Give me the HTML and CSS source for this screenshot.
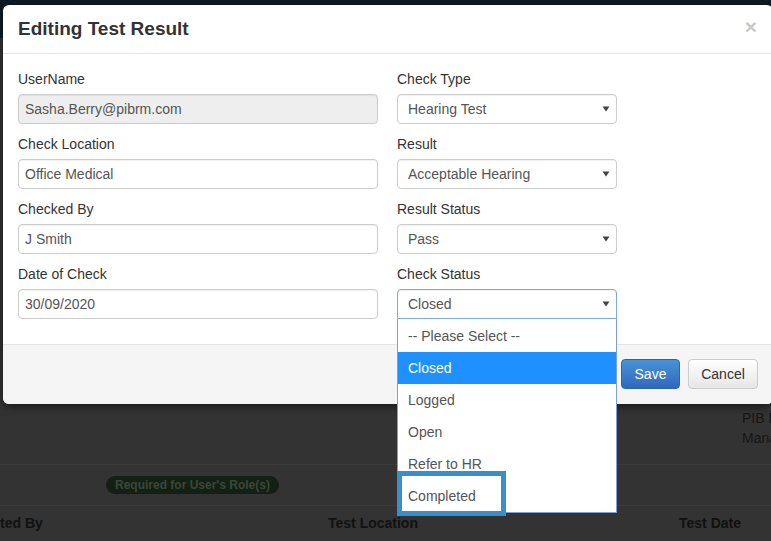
FILE: index.html
```html
<!DOCTYPE html>
<html>
<head>
<meta charset="utf-8">
<link rel="stylesheet" href="styles.css">
</head>
<body>
<div class="page">
  <div class="navbar"></div>
  <div class="behind-top">
    <div class="org">
      <div>PIB Risk</div>
      <div>Management</div>
    </div>
  </div>
  <div class="badge-row">
    <span class="badge">Required for User's Role(s)</span>
  </div>
  <div class="thead">
    <span class="th th-by">ted By</span>
    <span class="th th-loc">Test Location</span>
    <span class="th th-date">Test Date</span>
  </div>
</div>

<div class="modal">
  <div class="modal-header">
    <h4 class="modal-title">Editing Test Result</h4>
    <span class="close">&times;</span>
  </div>
  <div class="modal-body">
    <div class="form-grid">
      <div class="group">
        <label class="lbl">UserName</label>
        <div class="input disabled">Sasha.Berry@pibrm.com</div>
      </div>
      <div class="group">
        <label class="lbl">Check Type</label>
        <div class="input select"><span>Hearing Test</span><svg class="caret" width="8" height="6" viewBox="0 0 8 6"><path d="M0.5 0.5 L7.5 0.5 L4 5.5 Z" fill="#444"/></svg></div>
      </div>
      <div class="group">
        <label class="lbl">Check Location</label>
        <div class="input">Office Medical</div>
      </div>
      <div class="group">
        <label class="lbl">Result</label>
        <div class="input select"><span>Acceptable Hearing</span><svg class="caret" width="8" height="6" viewBox="0 0 8 6"><path d="M0.5 0.5 L7.5 0.5 L4 5.5 Z" fill="#444"/></svg></div>
      </div>
      <div class="group">
        <label class="lbl">Checked By</label>
        <div class="input">J Smith</div>
      </div>
      <div class="group">
        <label class="lbl">Result Status</label>
        <div class="input select"><span>Pass</span><svg class="caret" width="8" height="6" viewBox="0 0 8 6"><path d="M0.5 0.5 L7.5 0.5 L4 5.5 Z" fill="#444"/></svg></div>
      </div>
      <div class="group">
        <label class="lbl">Date of Check</label>
        <div class="input">30/09/2020</div>
      </div>
      <div class="group">
        <label class="lbl">Check Status</label>
        <div class="input select focused"><span>Closed</span><svg class="caret" width="8" height="6" viewBox="0 0 8 6"><path d="M0.5 0.5 L7.5 0.5 L4 5.5 Z" fill="#444"/></svg></div>
      </div>
    </div>
  </div>
  <div class="modal-footer">
    <button class="btn btn-primary">Save</button>
    <button class="btn btn-default">Cancel</button>
  </div>
</div>

<div class="dropdown">
  <div class="opt">-- Please Select --</div>
  <div class="opt selected">Closed</div>
  <div class="opt">Logged</div>
  <div class="opt">Open</div>
  <div class="opt">Refer to HR</div>
  <div class="opt">Completed</div>
</div>
<div class="annot"></div>
</body>
</html>
```

FILE: styles.css
```css
html, body {
  margin: 0;
  padding: 0;
}
body {
  width: 771px;
  height: 541px;
  overflow: hidden;
  background: #333333;
  font-family: "Liberation Sans", Arial, sans-serif;
  font-size: 14px;
  color: #333;
  position: relative;
}
.page {
  display: flex;
  flex-direction: column;
}
.navbar {
  height: 38px;
  background: #0e1a24;
}
.behind-top {
  height: 427px;
  box-sizing: border-box;
  padding-top: 370px;
  padding-left: 742px;
  border-bottom: 1px solid #3a3a3a;
  overflow: hidden;
  white-space: nowrap;
}
.org {
  color: #161616;
  font-size: 14px;
  line-height: 20px;
}
.badge-row {
  height: 41px;
  box-sizing: border-box;
  border-bottom: 1px solid #3a3a3a;
  padding-left: 106px;
  display: flex;
  align-items: center;
}
.badge {
  background: #132013;
  color: #3b473b;
  font-weight: bold;
  font-size: 12px;
  line-height: 18px;
  padding: 0 9px;
  border-radius: 9px;
  white-space: nowrap;
}
.thead {
  height: 34px;
  display: flex;
  align-items: center;
  white-space: nowrap;
}
.th {
  font-weight: bold;
  font-size: 14px;
  color: #111;
}
.th-by { width: 328px; }
.th-loc { width: 351px; }

.modal {
  position: absolute;
  left: 3px;
  top: 5px;
  width: 770px;
  background: #fff;
  border-radius: 6px;
  box-shadow: 0 3px 9px rgba(0,0,0,0.5);
}
.modal-header {
  display: flex;
  justify-content: space-between;
  align-items: center;
  padding: 15px;
  height: 18px;
  border-bottom: 1px solid #e5e5e5;
}
.modal-title {
  margin: 0;
  font-size: 19px;
  line-height: 20px;
  font-weight: bold;
  color: #333;
}
.close {
  font-size: 21px;
  font-weight: bold;
  color: #c8c8c8;
  line-height: 20px;
  margin-right: 1px;
  margin-top: -4px;
}
.modal-body {
  padding: 15px;
}
.form-grid {
  display: grid;
  grid-template-columns: 360px 220px;
  column-gap: 19px;
}
.group {
  display: flex;
  flex-direction: column;
  margin-bottom: 10px;
}
.lbl {
  line-height: 20px;
  margin-bottom: 5px;
  color: #333;
}
.input {
  height: 30px;
  box-sizing: border-box;
  border: 1px solid #ccc;
  border-radius: 4px;
  padding: 0 6px;
  line-height: 28px;
  color: #555;
  background: #fff;
  box-shadow: inset 0 1px 1px rgba(0,0,0,0.06);
}
.input.disabled {
  background: #eeeeee;
}
.select {
  display: flex;
  align-items: center;
  justify-content: space-between;
  padding: 0 6px 0 10px;
}
.caret {
  display: block;
}
.focused {
  border-color: #80a8e0;
  border-radius: 4px 4px 0 0;
}
.modal-footer {
  display: flex;
  justify-content: flex-end;
  gap: 8px;
  padding: 14px 15px 15px;
  background: #f5f5f5;
  border-top: 1px solid #e5e5e5;
  border-radius: 0 0 6px 6px;
}
.btn {
  height: 30px;
  box-sizing: border-box;
  font-family: "Liberation Sans", Arial, sans-serif;
  font-size: 14px;
  border-radius: 4px;
  padding: 0 12px;
}
.btn-primary {
  width: 59px;
  color: #fff;
  border: 1px solid #2e64ad;
  background: linear-gradient(#4a92d6, #3168bd);
}
.btn-default {
  width: 70px;
  color: #333;
  border: 1px solid #ccc;
  background: linear-gradient(#ffffff, #e6e6e6);
}

.dropdown {
  position: absolute;
  left: 397px;
  top: 319px;
  width: 220px;
  box-sizing: border-box;
  border: 1px solid #7e9fd6;
  border-top: none;
  background: #fff;
  padding-top: 1px;
}
.opt {
  height: 32px;
  line-height: 32px;
  padding-left: 10px;
  color: #555;
  white-space: nowrap;
}
.opt.selected {
  background: #1e90ff;
  color: #fff;
}
.annot {
  position: absolute;
  left: 397px;
  top: 471px;
  width: 109px;
  height: 45px;
  box-sizing: border-box;
  border: 5px solid #3a8fc6;
}
```
